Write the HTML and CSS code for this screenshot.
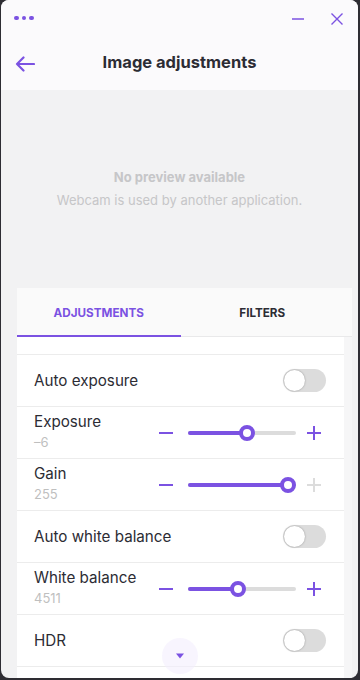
FILE: index.html
```html
<!DOCTYPE html>
<html lang="en">

<head>
  <meta charset="UTF-8">
  <meta name="viewport" content="width=device-width, initial-scale=1.0">
  <title>Image adjustments</title>
  <link rel="stylesheet" href="styles.css">
</head>

<body>
  <div class="window">
    <!-- title bar -->
    <div class="titlebar">
      <div class="dots"><span></span><span></span><span></span></div>
      <div class="win-btns">
        <svg class="win-btn" width="14" height="14" viewBox="0 0 14 14"><path d="M1 7h12" stroke="#7b52e2" stroke-width="1.4"/></svg>
        <svg class="win-btn" width="14" height="14" viewBox="0 0 14 14"><path d="M1.5 1.5l11 11M12.5 1.5l-11 11" stroke="#7b52e2" stroke-width="1.4"/></svg>
      </div>
    </div>

    <!-- header -->
    <div class="header">
      <svg class="back" width="20" height="16" viewBox="0 0 20 16"><path d="M19 8H2M8.5 1.5L2 8l6.5 6.5" fill="none" stroke="#7b52e2" stroke-width="2.2" stroke-linecap="round" stroke-linejoin="round"/></svg>
      <h1>Image adjustments</h1>
    </div>

    <!-- preview -->
    <div class="preview">
      <p class="preview-title">No preview available</p>
      <p class="preview-sub">Webcam is used by another application.</p>
    </div>

    <!-- settings panel -->
    <div class="panel">
      <div class="tabs">
        <div class="tab active">ADJUSTMENTS</div>
        <div class="tab">FILTERS</div>
      </div>
      <div class="content">
        <div class="list">
          <div class="spacer"></div>

          <div class="row">
            <span class="label">Auto exposure</span>
            <span class="toggle"><span class="knob"></span></span>
          </div>

          <div class="row">
            <div class="text">
              <span class="label">Exposure</span>
              <span class="value">–6</span>
            </div>
            <div class="ctrl">
              <svg class="step" width="24" height="24" viewBox="0 0 24 24"><path d="M5 12h14" stroke="#7b52e2" stroke-width="2"/></svg>
              <div class="slider">
                <div class="fill" style="width: 59px"></div>
                <div class="thumb" style="left: 59px"></div>
              </div>
              <svg class="step" width="24" height="24" viewBox="0 0 24 24"><path d="M5 12h14M12 5v14" stroke="#7b52e2" stroke-width="2"/></svg>
            </div>
          </div>

          <div class="row">
            <div class="text">
              <span class="label">Gain</span>
              <span class="value">255</span>
            </div>
            <div class="ctrl">
              <svg class="step" width="24" height="24" viewBox="0 0 24 24"><path d="M5 12h14" stroke="#7b52e2" stroke-width="2"/></svg>
              <div class="slider">
                <div class="fill" style="width: 100px"></div>
                <div class="thumb" style="left: 100px"></div>
              </div>
              <svg class="step" width="24" height="24" viewBox="0 0 24 24"><path d="M5 12h14M12 5v14" stroke="#dcdcdc" stroke-width="2"/></svg>
            </div>
          </div>

          <div class="row">
            <span class="label">Auto white balance</span>
            <span class="toggle"><span class="knob"></span></span>
          </div>

          <div class="row">
            <div class="text">
              <span class="label">White balance</span>
              <span class="value">4511</span>
            </div>
            <div class="ctrl">
              <svg class="step" width="24" height="24" viewBox="0 0 24 24"><path d="M5 12h14" stroke="#7b52e2" stroke-width="2"/></svg>
              <div class="slider">
                <div class="fill" style="width: 50px"></div>
                <div class="thumb" style="left: 50px"></div>
              </div>
              <svg class="step" width="24" height="24" viewBox="0 0 24 24"><path d="M5 12h14M12 5v14" stroke="#7b52e2" stroke-width="2"/></svg>
            </div>
          </div>

          <div class="row">
            <span class="label">HDR</span>
            <span class="toggle"><span class="knob"></span></span>
          </div>

          <div class="row last"></div>

          <div class="scroll-down">
            <svg width="10" height="6" viewBox="0 0 10 6"><path d="M1 0.5h8L5 5.5z" fill="#7b52e2"/></svg>
          </div>
        </div>
        <div class="track"></div>
      </div>
    </div>
  </div>
</body>

</html>
```

FILE: styles.css
```css
body {
  margin: 0;
  padding: 0 2px 2px 1px;
  background-color: #2e2d33;
  font-family: Inter, Lato, sans-serif;
  color: #2c2c34;
}

.window {
  height: 678px;
  border-radius: 8px;
  overflow: hidden;
  background-color: #f2f2f3;
  display: flex;
  flex-direction: column;
}

.titlebar {
  height: 42px;
  background-color: #fbfafc;
  display: flex;
  align-items: center;
  justify-content: space-between;
  padding: 0 14px 0 13px;
  flex-shrink: 0;
}

.dots {
  display: flex;
  gap: 3px;
  margin-top: -6px;
}

.dots span {
  width: 4.5px;
  height: 4.5px;
  border-radius: 50%;
  background-color: #7b52e2;
}

.win-btns {
  display: flex;
  gap: 25px;
  margin-top: -4px;
}

.header {
  height: 48px;
  background-color: #fbfafc;
  display: flex;
  align-items: center;
  position: relative;
  flex-shrink: 0;
}

.back {
  margin-left: 14px;
  margin-top: -4px;
}

.header h1 {
  position: absolute;
  left: 0;
  right: 0;
  margin: -8px 0 0;
  text-align: center;
  font-size: 16.5px;
  font-weight: 700;
  pointer-events: none;
}

.preview {
  height: 198px;
  display: flex;
  flex-direction: column;
  align-items: center;
  justify-content: center;
  color: #c6c6c8;
  font-size: 13px;
  flex-shrink: 0;
}

.preview p {
  margin: 0;
}

.preview-title {
  font-weight: 700;
  position: relative;
  top: -2px;
}

.preview-sub {
  margin-top: 5px !important;
}

.panel {
  flex: 1;
  display: flex;
  flex-direction: column;
  margin: 0 6px 0 16px;
  min-height: 0;
}

.tabs {
  height: 48px;
  display: flex;
  padding-right: 8px;
  background-color: #fafafa;
  border-bottom: 1px solid #e9e9ea;
  flex-shrink: 0;
}

.tab {
  flex: 1;
  display: flex;
  align-items: center;
  justify-content: center;
  font-size: 11.7px;
  font-weight: 700;
  color: #2c2c34;
  border-bottom: 2px solid transparent;
  margin-bottom: -1px;
  padding-top: 2px;
}

.tab.active {
  color: #7b52e2;
  border-bottom-color: #7b52e2;
}

.content {
  flex: 1;
  display: flex;
  min-height: 0;
}

.list {
  flex: 1;
  background-color: #ffffff;
  position: relative;
  overflow: hidden;
}

.track {
  width: 8px;
  background-color: #f6f6f7;
}

.spacer {
  height: 17px;
}

.row {
  height: 51px;
  border-top: 1px solid #ececec;
  display: flex;
  align-items: center;
  justify-content: space-between;
  padding: 0 18px 0 17px;
}

.label {
  font-size: 15.2px;
  color: #2c2c34;
}

.text {
  display: flex;
  flex-direction: column;
  margin-top: -3px;
}

.value {
  font-size: 13px;
  color: #bfbfbf;
  margin-top: 3px;
}

.toggle {
  width: 43px;
  height: 23px;
  border-radius: 12px;
  background-color: #dcdcdc;
  display: flex;
  align-items: center;
  padding-left: 1px;
  box-sizing: border-box;
}

.toggle .knob {
  width: 21px;
  height: 21px;
  border-radius: 50%;
  background-color: #ffffff;
  box-shadow: 0 0 2px rgba(0, 0, 0, 0.35);
}

.ctrl {
  display: flex;
  align-items: center;
}

.slider {
  position: relative;
  width: 108px;
  height: 4px;
  margin: 0 6px 0 10px;
  border-radius: 2px;
  background-color: #dcdcdc;
}

.fill {
  height: 4px;
  border-radius: 2px;
  background-color: #7b52e2;
}

.thumb {
  position: absolute;
  top: 2px;
  width: 8px;
  height: 8px;
  margin: -8px 0 0 -8px;
  border: 4px solid #7b52e2;
  border-radius: 50%;
  background-color: #ffffff;
}

.row.last {
  height: 20px;
}

.scroll-down {
  position: absolute;
  left: 145px;
  top: 301px;
  width: 36px;
  height: 36px;
  border-radius: 50%;
  background-color: rgba(243, 238, 253, 0.6);
  display: flex;
  align-items: center;
  justify-content: center;
}
```
